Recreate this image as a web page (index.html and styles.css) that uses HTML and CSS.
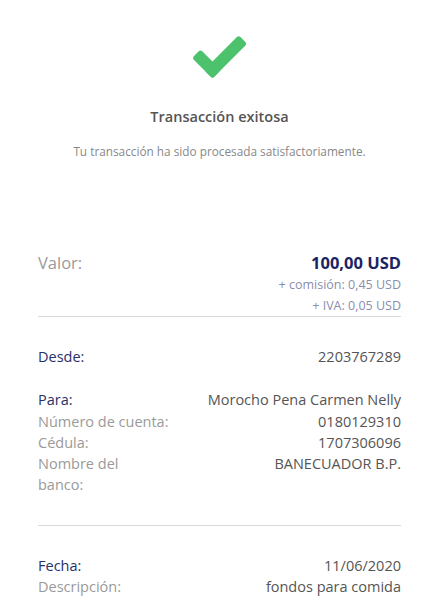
FILE: index.html
```html
<!DOCTYPE html>
<html lang="es">
<head>
  <meta charset="UTF-8" />
  <meta name="viewport" content="width=device-width, initial-scale=1.0"/>
  <title>Transacción exitosa</title>
  <link rel="stylesheet" href="styles.css">
</head>
<body>
  <header class="status">
    <svg class="check" width="60" height="48" viewBox="0 0 60 48">
      <rect x="16.5" y="31" width="49" height="12" rx="2.5" fill="#4cc26c" transform="rotate(-45 22.5 37)"/>
      <rect x="16.5" y="31" width="29" height="12" rx="2.5" fill="#4cc26c" transform="rotate(225 22.5 37)"/>
    </svg>
    <h1>Transacción exitosa</h1>
    <p>Tu transacción ha sido procesada satisfactoriamente.</p>
  </header>

  <div class="details">
    <section class="block amount">
      <div class="row">
        <span class="label">Valor:</span>
        <span class="total">100,00 USD</span>
      </div>
      <div class="extra">+ comisión: 0,45 USD</div>
      <div class="extra">+ IVA: 0,05 USD</div>
    </section>

    <section class="block">
      <div class="group">
        <div class="row">
          <span class="label main">Desde:</span>
          <span class="value">2203767289</span>
        </div>
      </div>
      <div class="group">
        <div class="row">
          <span class="label main">Para:</span>
          <span class="value">Morocho Pena Carmen Nelly</span>
        </div>
        <div class="row">
          <span class="label">Número de cuenta:</span>
          <span class="value">0180129310</span>
        </div>
        <div class="row">
          <span class="label">Cédula:</span>
          <span class="value">1707306096</span>
        </div>
        <div class="row">
          <span class="label narrow">Nombre del banco:</span>
          <span class="value">BANECUADOR B.P.</span>
        </div>
      </div>
    </section>

    <section class="block last">
      <div class="row">
        <span class="label main">Fecha:</span>
        <span class="value">11/06/2020</span>
      </div>
      <div class="row">
        <span class="label">Descripción:</span>
        <span class="value">fondos para comida</span>
      </div>
    </section>
  </div>
</body>
</html>
```

FILE: styles.css
```css
body {
  font-family: "Open Sans", "Noto Sans", sans-serif;
  background: #ffffff;
  margin: 0;
  padding: 0;
  color: #555;
}

.status {
  text-align: center;
  padding-top: 33px;
}

.check {
  display: block;
  margin: 0 auto;
}

.status h1 {
  margin: 27px 0 0;
  font-size: 14.5px;
  font-weight: 600;
  color: #555;
  line-height: 18px;
}

.status p {
  margin: 18px 0 0;
  font-size: 11.8px;
  color: #888;
  line-height: 14px;
}

.details {
  padding: 0 38px;
  margin-top: 94px;
}

.block {
  border-bottom: 1px solid #dadada;
  padding-bottom: 29px;
  margin-bottom: 29px;
}

.block.amount {
  padding-bottom: 0;
}

.block.last {
  border-bottom: none;
  margin-bottom: 0;
  padding-bottom: 0;
}

.group + .group {
  margin-top: 22px;
}

.row {
  display: flex;
  justify-content: space-between;
  align-items: flex-start;
  font-size: 14.5px;
  line-height: 21.25px;
}

.label {
  color: #9a9a9a;
}

.label.main {
  color: #27306b;
}

.label.narrow {
  width: 110px;
}

.value {
  color: #555;
  text-align: right;
}

.amount .row {
  line-height: 22px;
}

.amount .label {
  font-size: 16.5px;
}

.total {
  color: #1b2462;
  font-weight: 700;
  font-size: 16.5px;
}

.extra {
  text-align: right;
  font-size: 12.5px;
  line-height: 21px;
  color: #8a8eae;
}
```
